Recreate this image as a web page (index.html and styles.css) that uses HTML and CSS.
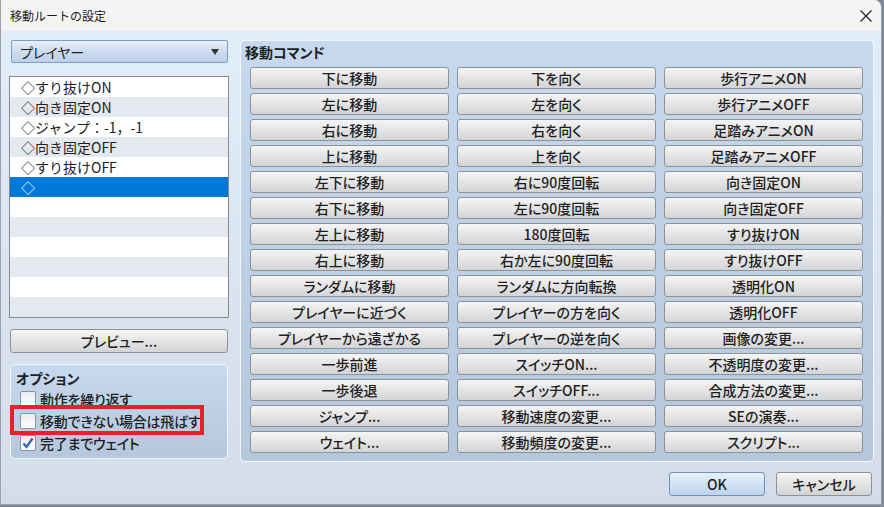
FILE: index.html
```html
<!DOCTYPE html>
<html lang="ja">
<head>
<meta charset="utf-8">
<title>移動ルートの設定</title>
<link rel="stylesheet" href="styles.css">
</head>
<body>
<div class="window">
  <div class="titlebar">
    <span class="title">移動ルートの設定</span>
    <svg class="close" width="12" height="12" viewBox="0 0 12 12"><path d="M0.5 0.5 L11.5 11.5 M11.5 0.5 L0.5 11.5" stroke="#1a1a1a" stroke-width="1.1" fill="none"/></svg>
  </div>
  <div class="content">
    <div class="main">
      <div class="left">
        <div class="dropdown">
          <span>プレイヤー</span>
          <svg width="8" height="6" viewBox="0 0 8 6"><path d="M0 0 H8 L4 6 Z" fill="#333"/></svg>
        </div>
        <ul class="list">
          <li>◇すり抜けON</li>
          <li>◇向き固定ON</li>
          <li>◇ジャンプ：-1，-1</li>
          <li>◇向き固定OFF</li>
          <li>◇すり抜けOFF</li>
          <li class="selected">◇</li>
          <li></li>
          <li></li>
          <li></li>
          <li></li>
          <li></li>
          <li></li>
        </ul>
        <button class="btn preview">プレビュー...</button>
        <div class="group options">
          <div class="group-title opt-title">オプション</div>
          <label class="check"><span class="box"></span>動作を繰り返す</label>
          <label class="check"><span class="box"></span>移動できない場合は飛ばす</label>
          <label class="check"><span class="box"><svg width="14" height="14" viewBox="0 0 14 14"><path d="M2.5 7.5 L5.5 11 L11.5 2.5" stroke="#2b63b4" stroke-width="2.2" fill="none"/></svg></span>完了までウェイト</label>
          <div class="highlight"></div>
        </div>
      </div>
      <div class="group commands">
        <div class="group-title cmd-title">移動コマンド</div>
        <div class="grid">
          <button class="btn">下に移動</button><button class="btn">下を向く</button><button class="btn">歩行アニメON</button>
          <button class="btn">左に移動</button><button class="btn">左を向く</button><button class="btn">歩行アニメOFF</button>
          <button class="btn">右に移動</button><button class="btn">右を向く</button><button class="btn">足踏みアニメON</button>
          <button class="btn">上に移動</button><button class="btn">上を向く</button><button class="btn">足踏みアニメOFF</button>
          <button class="btn">左下に移動</button><button class="btn">右に90度回転</button><button class="btn">向き固定ON</button>
          <button class="btn">右下に移動</button><button class="btn">左に90度回転</button><button class="btn">向き固定OFF</button>
          <button class="btn">左上に移動</button><button class="btn">180度回転</button><button class="btn">すり抜けON</button>
          <button class="btn">右上に移動</button><button class="btn">右か左に90度回転</button><button class="btn">すり抜けOFF</button>
          <button class="btn">ランダムに移動</button><button class="btn">ランダムに方向転換</button><button class="btn">透明化ON</button>
          <button class="btn">プレイヤーに近づく</button><button class="btn">プレイヤーの方を向く</button><button class="btn">透明化OFF</button>
          <button class="btn">プレイヤーから遠ざかる</button><button class="btn">プレイヤーの逆を向く</button><button class="btn">画像の変更...</button>
          <button class="btn">一歩前進</button><button class="btn">スイッチON...</button><button class="btn">不透明度の変更...</button>
          <button class="btn">一歩後退</button><button class="btn">スイッチOFF...</button><button class="btn">合成方法の変更...</button>
          <button class="btn">ジャンプ...</button><button class="btn">移動速度の変更...</button><button class="btn">SEの演奏...</button>
          <button class="btn">ウェイト...</button><button class="btn">移動頻度の変更...</button><button class="btn">スクリプト...</button>
        </div>
      </div>
    </div>
    <div class="footer">
      <button class="btn ok">OK</button>
      <button class="btn">キャンセル</button>
    </div>
  </div>
</div>
</body>
</html>
```
FILE: styles.css
```css
html, body {
  margin: 0;
  padding: 0;
}
body {
  width: 884px;
  height: 507px;
  background: #7d8894;
  font-family: "Noto Sans CJK JP", "Noto Sans", sans-serif;
  color: #1e1e1e;
  overflow: hidden;
}
.window {
  box-sizing: border-box;
  width: 882px;
  height: 505px;
  border: 1px solid #9aa1a8;
  border-top: none;
  border-top-right-radius: 8px;
  overflow: hidden;
  display: flex;
  flex-direction: column;
  background: linear-gradient(#e3eefb, #d2dde9);
}
.titlebar {
  height: 31px;
  flex: none;
  background: #f3f3f3;
  display: flex;
  align-items: center;
  justify-content: space-between;
  padding: 0 9px 0 9px;
  font-size: 12px;
}
.title {
  color: #1a1a1a;
}
.content {
  flex: 1;
  display: flex;
  flex-direction: column;
}
.main {
  display: flex;
  padding: 9px 0 0 8px;
  gap: 11px;
}
.left {
  width: 220px;
  display: flex;
  flex-direction: column;
}
.dropdown {
  box-sizing: border-box;
  height: 23px;
  margin: 0 1px 0 2px;
  border: 1px solid #7d9cc0;
  border-radius: 2px;
  background: linear-gradient(#e6effa, #cddcef 50%, #bdd1ea);
  display: flex;
  align-items: center;
  justify-content: space-between;
  padding: 0 8px 0 8px;
  font-size: 14px;
  font-feature-settings: "palt";
}
.list {
  list-style: none;
  margin: 13px 0 0 0;
  padding: 0;
  height: 242px;
  box-sizing: border-box;
  border: 1px solid #848a91;
  background: #fff;
}
.list li {
  height: 20px;
  line-height: 20px;
  padding-left: 11px;
  font-size: 14px;
  white-space: nowrap;
}
.list li:nth-child(even) {
  background: #e3e9ef;
}
.list li.selected {
  background: #0078d7;
  color: #fff;
}
.btn {
  box-sizing: border-box;
  border: 1px solid #8f9295;
  border-radius: 3px;
  background: linear-gradient(#f5f5f5, #e6e6e7 45%, #d2d4d6);
  font-family: "Noto Sans CJK JP", "Noto Sans", sans-serif;
  font-size: 14px;
  font-weight: 500;
  font-feature-settings: "palt";
  color: #1e1e1e;
  padding: 0;
  margin: 0;
  line-height: 20px;
  white-space: nowrap;
}
.preview {
  height: 24px;
  margin: 11px 1px 0 1px;
}
.group {
  box-sizing: border-box;
  border: 1px solid #f3f7fc;
  border-radius: 5px;
  background: linear-gradient(#c6d9ee, #b4c7dd);
}
.options {
  position: relative;
  height: 95px;
  margin: 11px 1px 0 1px;
  padding: 3px 0 0 9px;
}
.group-title {
  font-size: 14px;
  font-weight: 700;
  font-feature-settings: "palt";
  line-height: 20px;
  height: 20px;
}
.opt-title {
  margin-left: -4px;
}
.check {
  display: flex;
  align-items: center;
  gap: 4px;
  height: 22px;
  font-size: 14px;
  font-weight: 500;
  font-feature-settings: "palt";
  letter-spacing: -0.2px;
}
.box {
  box-sizing: border-box;
  width: 16px;
  height: 16px;
  border: 1px solid #8e9296;
  border-radius: 2px;
  background: linear-gradient(#e9ecef, #ffffff);
  display: flex;
  align-items: center;
  justify-content: center;
}
.highlight {
  position: absolute;
  left: -1px;
  top: 40px;
  width: 194px;
  height: 30px;
  box-sizing: border-box;
  border: 4px solid #e8202a;
}
.commands {
  width: 634px;
  height: 422px;
  padding: 0 10px 8px 9px;
}
.cmd-title {
  line-height: 22px;
  height: 22px;
  margin: 0 0 4px -5px;
}
.grid {
  display: grid;
  grid-template-columns: repeat(3, 199px);
  grid-auto-rows: 22px;
  column-gap: 8px;
  row-gap: 4px;
}
.footer {
  display: flex;
  justify-content: flex-end;
  gap: 11px;
  padding: 10px 9px 0 0;
}
.footer .btn {
  width: 96px;
  height: 24px;
}
.footer .ok {
  border-color: #7391bb;
  background: linear-gradient(#e6f0fb, #d1e2f5 50%, #bcd4ee);
}
```
